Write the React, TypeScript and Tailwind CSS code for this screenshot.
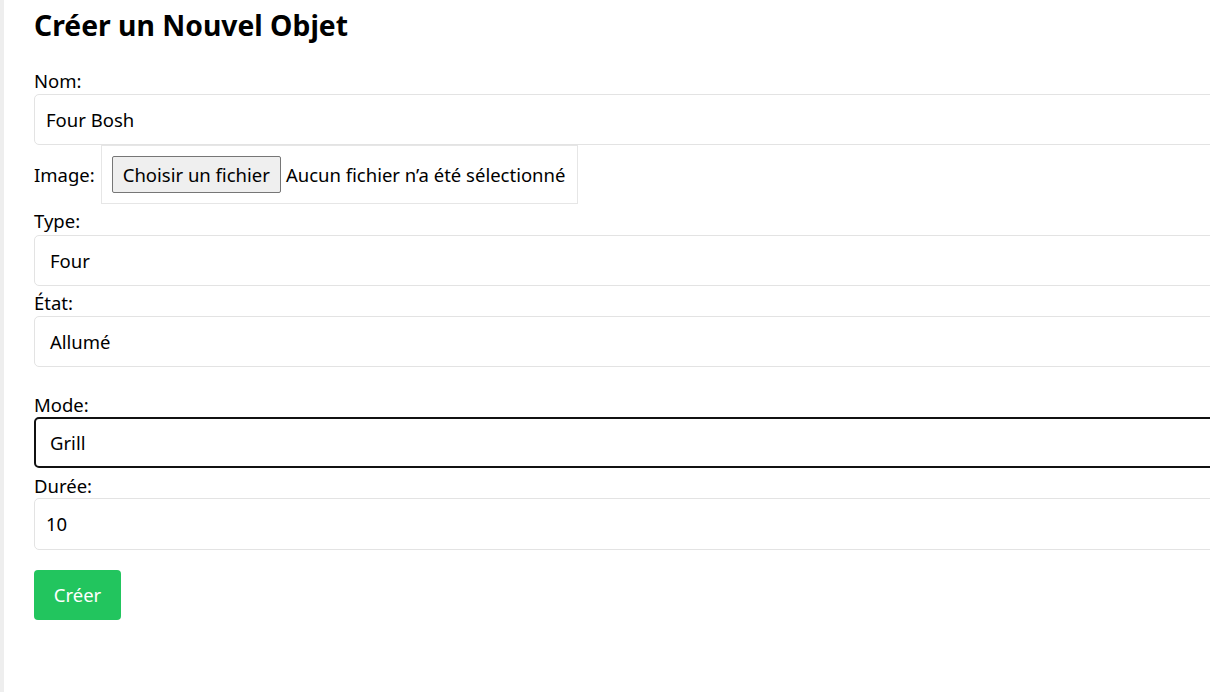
export default function App() {
  const font = { fontFamily: '"Noto Sans", "Open Sans", sans-serif' };
  return (
    <div className="h-[692px] w-[1210px] overflow-hidden bg-white" style={font}>
      <div className="flex h-full">
        <div className="w-[4px] shrink-0 bg-[#eeeeee]" />
        <div className="w-[1300px] shrink-0 pl-[30px] text-[18.5px] text-black">
          <h1 className="mt-[6px] text-[28.3px] font-bold leading-[38px]">Créer un Nouvel Objet</h1>

          <label className="mt-[26px] block leading-[22px]">Nom:</label>
          <div className="mt-[2px] flex h-[51px] items-center rounded-[5px] border border-[#e3e3e3] px-[11px]">
            Four Bosh
          </div>

          <div className="flex items-center">
            <span className="mr-[6px]">Image:</span>
            <div className="flex h-[59px] items-center border border-[#e6e6e6] px-[10px]">
              <span className="flex h-[37px] items-center rounded-[2px] border border-[#767676] bg-[#efefef] px-[10px]">
                Choisir un fichier
              </span>
              <span className="ml-[5px] pr-[2px]">Aucun fichier n’a été sélectionné</span>
            </div>
          </div>

          <label className="mt-[6px] block leading-[22px]">Type:</label>
          <div className="mt-[3px] flex h-[51px] items-center rounded-[5px] border border-[#e3e3e3] px-[15px]">
            Four
          </div>

          <label className="mt-[6px] block leading-[22px]">État:</label>
          <div className="mt-[2px] flex h-[51px] items-center rounded-[5px] border border-[#e3e3e3] px-[15px]">
            Allumé
          </div>

          <label className="mt-[27px] block leading-[22px]">Mode:</label>
          <div className="mt-[1px] flex h-[51px] items-center rounded-[5px] border-2 border-[#111111] px-[14px]">
            Grill
          </div>

          <label className="mt-[7px] block leading-[22px]">Durée:</label>
          <div className="mt-[1px] flex h-[52px] items-center rounded-[5px] border border-[#e3e3e3] px-[11px]">
            10
          </div>

          <button className="mt-[20px] h-[50px] w-[87px] rounded-[4px] bg-[#22c55e] text-white">Créer</button>
        </div>
      </div>
    </div>
  );
}
